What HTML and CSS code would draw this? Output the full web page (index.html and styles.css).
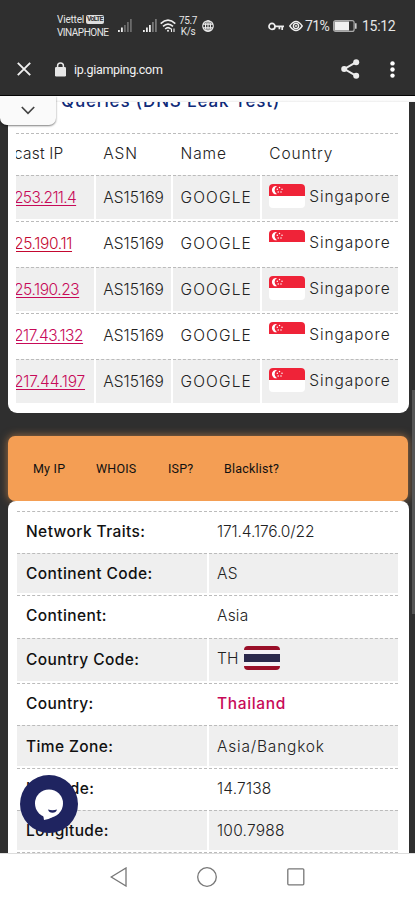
FILE: index.html
```html
<!DOCTYPE html>
<html lang="en">
<head>
<meta charset="utf-8">
<title>ip.giamping.com</title>
<link rel="stylesheet" href="styles.css">
</head>
<body>
<div class="phone">
  <header class="status">
    <div class="carrier">
      <div class="carrier-top"><span>Viettel</span><b class="volte">VoLTE</b></div>
      <div class="carrier-sub">VINAPHONE</div>
    </div>
    <svg class="signal" width="14" height="14" viewBox="0 0 14 14"><path fill="#eee" d="M0 11h1.800v2H0zM3 8.500h1.800V13H3z"/><path fill="#6b6b6b" d="M6 6h1.800v7H6zM9 3h1.800v10H9zM12 0h1.800v13H12z"/></svg>
    <svg class="signal signal-two" width="14" height="14" viewBox="0 0 14 14"><path fill="#eee" d="M0 11h1.800v2H0zM3 8.500h1.800V13H3zM6 6h1.800v7H6z"/><path fill="#777" d="M9 3h1.800v10H9zM12 0h1.800v13H12z"/></svg>
    <svg class="wifi" width="16" height="14" viewBox="0 0 16 14" fill="none" stroke="#eee" stroke-width="1.600"><path d="M.7 4.600Q8-2.200 15.300 4.600M3 7.400q5-4.600 10 0M5.200 10q2.800-2.600 5.600 0"/><circle cx="8" cy="11.800" r="1" fill="#eee" stroke="none"/><path stroke-width="1.100" d="M11.500 9.500v3.500M14 9.500v3.500"/></svg>
    <div class="speed"><span>75.7</span><span>K/s</span></div>
    <svg class="globe" width="12" height="12" viewBox="0 0 12 12" fill="none" stroke="#eee" stroke-width="1.100"><circle cx="6" cy="6" r="5.300"/><ellipse cx="6" cy="6" rx="2.500" ry="5.300"/><path d="M1 4.100h10M1 7.900h10M6 .7v10.600"/></svg>
    <svg class="key" width="16" height="9" viewBox="0 0 16 9" fill="none" stroke="#eee" stroke-width="1.700"><circle cx="4" cy="4.400" r="3"/><path d="M7 4.400h9M14.200 4.400v3.600M11.400 4.400v2.800"/></svg>
    <svg class="eye" width="14" height="12" viewBox="0 0 14 12" fill="none" stroke="#eee" stroke-width="1.400"><path d="M.8 6Q7-3 13.200 6 7 15 .8 6z"/><circle cx="7" cy="6" r="2.600"/><circle cx="7" cy="6" r="1" fill="#eee" stroke="none"/></svg>
    <span class="percent">71%</span>
    <svg class="battery" width="24" height="12" viewBox="0 0 24 12"><rect x=".6" y=".6" width="20.500" height="10.800" rx="2" fill="none" stroke="#aaa" stroke-width="1.200"/><rect x="1.500" y="1.500" width="14.500" height="9" fill="#f2f2f2"/><path fill="#ccc" d="M22 3.200h1.600v5.600H22z"/></svg>
    <span class="clock">15:12</span>
  </header>
  <div class="address">
    <svg class="close" width="14" height="14" viewBox="0 0 14 14" stroke="#f0f0f0" stroke-width="1.900"><path d="M.8.8l12.400 12.400M13.200.8L.8 13.200"/></svg>
    <svg class="lock" width="11" height="15" viewBox="0 0 11 15"><rect y="5" width="11" height="9.500" rx="1.200" fill="#e6e6e6"/><path d="M2.600 6V3.800a2.900 2.900 0 0 1 5.800 0V6" fill="none" stroke="#e6e6e6" stroke-width="1.500"/></svg>
    <span class="url">ip.giamping.com</span>
    <svg class="share" width="19" height="20" viewBox="0 0 19 20" fill="#ececec"><path d="M15.200 3.200L3.400 10l11.800 6.800" fill="none" stroke="#ececec" stroke-width="2"/><circle cx="15.200" cy="3.200" r="3"/><circle cx="3.200" cy="10" r="3"/><circle cx="15.200" cy="16.800" r="3"/></svg>
    <svg class="more" width="5" height="17" viewBox="0 0 5 17" fill="#fff"><circle cx="2.500" cy="2.400" r="2.200"/><circle cx="2.500" cy="8.500" r="2.200"/><circle cx="2.500" cy="14.600" r="2.200"/></svg>
  </div>
  <main class="page">
    <section class="card dns">
      <h2>Queries (DNS Leak Test)</h2>
      <div class="dns-table">
        <div class="row head"><div class="w-cast">cast IP</div><div>ASN</div><div>Name</div><div>Country</div></div>
        <div class="row shade"><div><a class="tight">253.211.4</a></div><div class="asn">AS15169</div><div class="goog">GOOGLE</div><div class="place"><svg class="flag"><use href="#sg"/></svg><span>Singapore</span></div></div>
        <div class="row"><div><a class="red">25.190.11</a></div><div class="asn">AS15169</div><div class="goog">GOOGLE</div><div class="place"><svg class="flag"><use href="#sg"/></svg><span>Singapore</span></div></div>
        <div class="row shade"><div><a>25.190.23</a></div><div class="asn">AS15169</div><div class="goog">GOOGLE</div><div class="place"><svg class="flag"><use href="#sg"/></svg><span>Singapore</span></div></div>
        <div class="row"><div><a>217.43.132</a></div><div class="asn">AS15169</div><div class="goog">GOOGLE</div><div class="place"><svg class="flag"><use href="#sg"/></svg><span>Singapore</span></div></div>
        <div class="row shade"><div><a class="loose">217.44.197</a></div><div class="asn">AS15169</div><div class="goog">GOOGLE</div><div class="place"><svg class="flag"><use href="#sg"/></svg><span>Singapore</span></div></div>
      </div>
    </section>
    <nav class="tabs"><a class="t1">My IP</a><a class="t2">WHOIS</a><a class="t3">ISP?</a><a>Blacklist?</a></nav>
    <section class="card info">
      <div class="pair"><div>Network Traits:</div><div class="v-net">171.4.176.0/22</div></div>
      <div class="pair shade"><div>Continent Code:</div><div>AS</div></div>
      <div class="pair"><div>Continent:</div><div>Asia</div></div>
      <div class="pair tall shade"><div>Country Code:</div><div class="th"><span>TH</span><svg class="flag" viewBox="0 0 36 24"><clipPath id="r"><rect width="36" height="24" rx="4"/></clipPath><g clip-path="url(#r)"><path fill="#f4f1f5" d="M0 0h36v24H0z"/><path fill="#990f28" d="M0 0h36v4H0zM0 20h36v4H0z"/><path fill="#2b294c" d="M0 8h36v8H0z"/></g></svg></div></div>
      <div class="pair"><div>Country:</div><div class="thai">Thailand</div></div>
      <div class="pair shade"><div>Time Zone:</div><div class="v-zone">Asia/Bangkok</div></div>
      <div class="pair"><div>Latitude:</div><div>14.7138</div></div>
      <div class="pair shade"><div>Longitude:</div><div class="v-num">100.7988</div></div>
      <div class="pair last"><div></div><div></div></div>
    </section>
    <div class="topline"></div>
    <div class="collapse"><svg width="14" height="9" viewBox="0 0 14 9" fill="none" stroke="#444" stroke-width="1.700"><path d="M.8 1L7 7.300 13.200 1"/></svg></div>
    <div class="scroll"></div>
    <div class="chat"><svg width="58" height="58" viewBox="0 0 58 58"><circle cx="29" cy="29" r="29" fill="#1f2460"/><circle cx="29" cy="28.500" r="14" fill="#fff"/><path fill="#fff" d="M23 39l1 6q6-1.200 10-3.500z"/><path fill="#1f2460" d="M28 34.500q4.500 1.400 9 0-1 3.300-4.500 3.300T28 34.500z"/></svg></div>
  </main>
  <footer class="sysnav">
    <svg width="18" height="20" viewBox="0 0 18 20"><path d="M16 1v18L1.200 10z"/></svg>
    <svg class="home" width="20" height="20" viewBox="0 0 20 20"><circle cx="10" cy="10" r="9.300"/></svg>
    <svg class="recent" width="18" height="18" viewBox="0 0 18 18"><rect x=".8" y=".8" width="16" height="16" rx="1"/></svg>
  </footer>
</div>
<svg class="defs"><symbol id="sg" viewBox="0 0 36 24"><clipPath id="s"><rect width="36" height="24" rx="4"/></clipPath><g clip-path="url(#s)"><path fill="#fff" d="M0 0h36v24H0z"/><path fill="#ef2338" d="M0 0h36v12H0z"/></g><path fill="#fff" d="M8 2a4.200 4.200 0 1 0 0 8.200A4.700 4.700 0 0 1 8 2z"/><g fill="#fff"><circle cx="10.500" cy="3.400" r=".75"/><circle cx="13" cy="5.200" r=".75"/><circle cx="12" cy="8" r=".75"/><circle cx="9.200" cy="8" r=".75"/><circle cx="8.300" cy="5.200" r=".75"/></g></symbol></svg>
</body>
</html>
```
FILE: styles.css
```css
* { box-sizing: border-box; }
body { margin: 0; font-family: Inter, sans-serif; }
svg { display: block; flex: none; }
.defs { position: absolute; width: 0; height: 0; }
.phone { width: 415px; height: 900px; overflow: hidden; display: flex; flex-direction: column; background: #2f2f2f; }

.status { height: 48px; display: flex; align-items: center; padding: 4px 0 0 57px; font-family: Roboto, sans-serif; color: #e6e6e6; white-space: nowrap; }
.carrier { width: 61px; font-size: 10px; line-height: 13px; }
.carrier-top { display: flex; align-items: center; gap: 2px; }
.carrier-top span { letter-spacing: -.2px; }
.carrier-sub { letter-spacing: -.5px; }
.volte { background: #ddd; color: #333; border-radius: 2px; font-size: 7px; line-height: 9px; letter-spacing: -.8px; padding: 0 1px; }
.signal-two { margin-left: 11px; }
.wifi { margin-left: 3px; }
.speed { width: 20px; margin: 0 4px 0 2px; display: flex; flex-direction: column; align-items: center; font-size: 10px; line-height: 11px; letter-spacing: -.4px; }
.key { margin-left: 54px; }
.eye { margin-left: 5px; }
.percent { width: 28px; margin-left: 2px; font-size: 14px; letter-spacing: -.6px; }
.clock { margin-left: 5px; font-size: 14px; letter-spacing: -.3px; }

.address { height: 48px; display: flex; align-items: center; padding: 0 20px 5px 17px; border-bottom: 1px solid #050505; }
.lock { margin: 0 8px 0 24px; }
.url { flex: 1; color: #f2f2f2; font: 12.500px Roboto, sans-serif; letter-spacing: -.3px; }
.share { margin-right: -1px; }
.more { margin-left: 31px; }

.page { height: 757px; position: relative; overflow: hidden; padding-left: 8px; background: #2f2f2f; }
.card { width: 401px; background: #fff; }
.dns { height: 317px; border-radius: 0 0 9px 9px; padding-left: 8px; }
h2 { margin: 0; height: 37px; padding-left: 45px; font-size: 17px; line-height: 10px; font-weight: 500; color: #0f2a78; letter-spacing: .85px; white-space: nowrap; }
.dns-table { width: 382px; overflow: hidden; font-size: 15.500px; font-weight: 300; color: #222; }
.row { display: grid; grid-template-columns: 78px 75.500px 87px 136px; column-gap: 1.750px; width: 383px; height: 46px; padding-bottom: 2px; white-space: nowrap; }
.row > div { border-top: 1px dashed #bbb; padding-left: 7.500px; display: flex; align-items: center; }
.row > div:first-child { padding-left: 0; text-indent: -2px; }
.row.head { height: 42px; padding-bottom: 2px; margin-bottom: 0; letter-spacing: .9px; }
.row .w-cast { letter-spacing: .2px; }
.shade > div { background: #efefef; }
.row a { color: #c70a58; text-decoration: underline; text-underline-offset: 2px; letter-spacing: -.45px; }
.row .tight { letter-spacing: -.65px; }
.row .loose { letter-spacing: -.15px; }
.row .red { color: #c40830; letter-spacing: -.35px; }
.row .asn { letter-spacing: .05px; }
.row .goog { letter-spacing: 1.150px; }
.row .place { gap: 4px; padding-bottom: 4px; }
.flag { width: 36px; height: 24px; }
.place span { letter-spacing: .9px; padding-top: 2px; }

.tabs { width: 400px; height: 65px; margin-top: 23px; border-radius: 7px; background: #f49e54; box-shadow: 0 0 8px rgba(244,158,84,.6); display: flex; align-items: center; padding-left: 25px; font: 12.500px Roboto, sans-serif; letter-spacing: .2px; color: #111; }
.t1 { width: 63px; } .t2 { width: 72px; } .t3 { width: 56px; }
.info { position: relative; height: 360px; border-radius: 8px 8px 0 0; padding: 10px 0 0 9px; }
.pair { display: grid; grid-template-columns: 190px 189px; column-gap: 2px; height: 42.200px; padding-bottom: 2px; font-size: 15.500px; color: #222; white-space: nowrap; }
.pair.tall { height: 45.700px; }
.pair > div { border-top: 1px dashed #bbb; padding-left: 9px; display: flex; align-items: center; font-weight: 300; letter-spacing: .2px; }
.pair > div:first-child { font-weight: 500; color: #111; letter-spacing: .4px; }
.pair > div + div { padding-left: 8px; }
.pair .v-net { letter-spacing: -.1px; }
.pair .v-zone { letter-spacing: .8px; }
.pair .v-num { letter-spacing: .25px; }
.pair .th { gap: 5px; padding-bottom: 3px; }
.pair .thai { color: #c70a58; font-weight: 500; letter-spacing: .65px; }

.topline { position: absolute; top: 0; left: 0; width: 415px; height: 6px; background: linear-gradient(#fff 65%, #ededed); }
.collapse { position: absolute; top: 0; left: 0; width: 56px; height: 29px; background: #fafafa; border-radius: 0 0 7px 7px; box-shadow: 0 1px 2px rgba(0,0,0,.5); display: flex; align-items: center; justify-content: center; }
.scroll { position: absolute; top: 294px; right: 0; width: 3px; height: 224px; background: #555; }
.chat { position: absolute; left: 20px; top: 679px; }

.sysnav { height: 47px; background: #fff; border-top: 1px solid #ddd; display: flex; align-items: center; padding-left: 110px; }
.sysnav svg { fill: none; stroke: #777; stroke-width: 1.300; }
.home { margin-left: 69px; }
.recent { margin-left: 70px; }
```
